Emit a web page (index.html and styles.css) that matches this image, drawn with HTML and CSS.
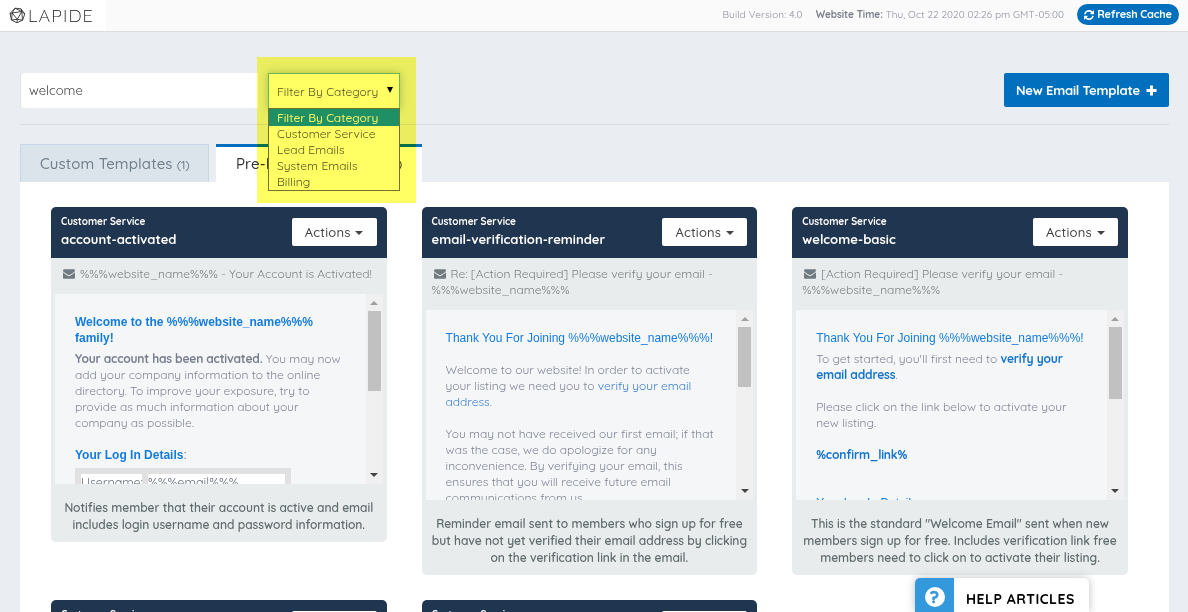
FILE: index.html
```html
<!DOCTYPE html>
<html lang="en">
<head>
<meta charset="utf-8">
<title>Email Templates</title>
<link rel="stylesheet" href="styles.css">
</head>
<body>
<svg class="defs" width="0" height="0">
  <symbol id="mail" viewBox="0 256 1792 1408"><path d="M1792 710v794q0 66-47 113t-113 47h-1472q-66 0-113-47t-47-113v-794q44 49 101 87 362 246 497 345 57 42 92.500 65.500t94.500 48 110 24.500h2q51 0 110-24.500t94.500-48 92.500-65.500q170-123 498-345 57-39 100-87zm0-294q0 79-49 151t-122 123q-376 261-468 325-10 7-42.500 31t-54 38.500-52 32.500-57.500 27-50 9h-2q-23 0-50-9t-57.500-27-52-32.500-54-38.500-42.500-31q-91-64-262-182.500t-205-142.500q-62-42-117-115.500t-55-136.500q0-78 41.500-130t118.500-52h1472q65 0 112.500 47t47.500 113z"/></symbol>
</svg>
<header class="topbar">
  <div class="brand">
    <svg class="brand-mark" viewBox="0 0 17 17" fill="none" stroke="#333" stroke-width=".900" stroke-linejoin="round"><path d="M6 1.200 12 1.800 15.800 7 13.500 13.200 8 15.800 2.500 13 1 6.500Z"/><path d="M6 1.200 3.200 6 12.800 4.500 8.300 12.300 3.200 6 1 6.500M12 1.800 12.800 4.500 15.800 7M12.800 4.500 13.500 13.200 8.300 12.300 8 15.800M8.300 12.300 2.500 13 3.200 6M6 1.200 12.800 4.500"/></svg>
    <span class="brand-name">LAPIDE</span>
  </div>
  <div class="status">
    <span class="build">Build Version: 4.0</span>
    <span class="time"><b>Website Time:</b> Thu, Oct 22 2020 02:26 pm GMT-05:00</span>
    <button class="refresh"><svg viewBox="0 0 1536 1536"><path fill="#fff" d="M1511 928q0 5-1 7-64 268-268 434.500t-478 166.500q-146 0-282.500-55t-243.500-157l-129 129q-19 19-45 19t-45-19-19-45v-448q0-26 19-45t45-19h448q26 0 45 19t19 45-19 45l-137 137q71 66 161 102t187 36q134 0 250-65t186-179q11-17 53-117 8-23 30-23h192q13 0 22.500 9.500t9.500 22.500zm25-800v448q0 26-19 45t-45 19h-448q-26 0-45-19t-19-45 19-45l138-138q-148-137-349-137-134 0-250 65t-186 179q-11 17-53 117-8 23-30 23h-199q-13 0-22.500-9.500t-9.500-22.500v-7q65-268 270-434.500t480-166.500q146 0 284 55.500t245 156.500l130-129q19-19 45-19t45 19 19 45z"/></svg><span>Refresh Cache</span></button>
  </div>
</header>
<main class="page">
  <div class="toolbar">
    <div class="search">welcome</div>
    <div class="filter">
      <div class="select"><span>Filter By Category</span><i class="select-arrow"></i></div>
      <ul class="options">
        <li class="on">Filter By Category</li>
        <li>Customer Service</li>
        <li>Lead Emails</li>
        <li>System Emails</li>
        <li>Billing</li>
      </ul>
      <div class="marker"></div>
    </div>
    <button class="new"><span>New Email Template</span><svg viewBox="0 0 11 11"><path fill="#fff" d="M4 .500h3V4h3.500v3H7v3.500H4V7H.500V4H4z"/></svg></button>
  </div>
  <nav class="tabs">
    <div class="tab">Custom Templates <small>(1)</small></div>
    <div class="tab active"><span>Pre-Made Templates</span><small>(6)</small></div>
  </nav>
  <section class="panel">
    <article class="card">
      <div class="card-head"><div><div class="cat">Customer Service</div><div class="name">account-activated</div></div><button class="actions">Actions <i></i></button></div>
      <div class="subject"><svg><use href="#mail"/></svg>%%%website_name%%% - Your Account is Activated!</div>
      <div class="preview">
        <div class="mail">
          <h4>Welcome to the %%%website_name%%%<br>family!</h4>
          <p><b>Your account has been activated.</b> You may now<br>add your company information to the online<br>directory. To improve your exposure, try to<br>provide as much information about your<br>company as possible.</p>
          <h4 class="login">Your Log In Details<span>:</span></h4>
          <div class="creds"><span>Username:</span><span>%%%email%%%</span></div>
        </div>
        <div class="bar"><i class="up"></i><i class="thumb t1"></i><i class="down"></i></div>
      </div>
      <div class="desc">Notifies member that their account is active and email<br>includes login username and password information.</div>
    </article>
    <article class="card">
      <div class="card-head"><div><div class="cat">Customer Service</div><div class="name">email-verification-reminder</div></div><button class="actions">Actions <i></i></button></div>
      <div class="subject"><svg><use href="#mail"/></svg>Re: [Action Required] Please verify your email -<br>%%%website_name%%%</div>
      <div class="preview">
        <div class="mail">
          <h4 class="thin">Thank You For Joining %%%website_name%%%!</h4>
          <p class="gap">Welcome to our website! In order to activate<br>your listing we need you to <a>verify your email<br>address</a>.</p>
          <p class="gap">You may not have received our first email; if that<br>was the case, we do apologize for any<br>inconvenience. By verifying your email, this<br>ensures that you will receive future email<br>communications from us.</p>
        </div>
        <div class="bar"><i class="up"></i><i class="thumb t2"></i><i class="down"></i></div>
      </div>
      <div class="desc">Reminder email sent to members who sign up for free<br>but have not yet verified their email address by clicking<br>on the verification link in the email.</div>
    </article>
    <article class="card">
      <div class="card-head"><div><div class="cat">Customer Service</div><div class="name name-wide">welcome-basic</div></div><button class="actions">Actions <i></i></button></div>
      <div class="subject"><svg><use href="#mail"/></svg>[Action Required] Please verify your email -<br>%%%website_name%%%</div>
      <div class="preview">
        <div class="mail">
          <h4 class="thin">Thank You For Joining %%%website_name%%%!</h4>
          <p>To get started, you'll first need to <a class="strong">verify your<br>email address</a>.</p>
          <p class="gap">Please click on the link below to activate your<br>new listing.</p>
          <p class="gap"><a class="strong">%confirm_link%</a></p>
          <h4 class="thin more">Your Log In Details</h4>
        </div>
        <div class="bar"><i class="up"></i><i class="thumb t3"></i><i class="down"></i></div>
      </div>
      <div class="desc">This is the standard "Welcome Email" sent when new<br>members sign up for free. Includes verification link free<br>members need to click on to activate their listing.</div>
    </article>
    <article class="card">
      <div class="card-head"><div class="cat">Customer Service</div><button class="actions">Actions <i></i></button></div>
    </article>
    <article class="card">
      <div class="card-head"><div class="cat">Customer Service</div><button class="actions">Actions <i></i></button></div>
    </article>
  </section>
</main>
<aside class="help">
  <div class="help-icon"><b>?</b></div>
  <div class="help-text">HELP ARTICLES</div>
</aside>
</body>
</html>
```
FILE: styles.css
```css
* { box-sizing: border-box; }
html, body { height: 612px; overflow: hidden; }
html { background: #eaedf2; }
body { margin: 0; font: 12px/16px Quicksand, Lato, sans-serif; color: #444; position: relative; white-space: nowrap; }
button { font: inherit; border: 0; padding: 0; white-space: nowrap; }
.defs { position: absolute; }

.topbar { height: 32px; background: #fafafa; border-bottom: 1px solid #dcdde0; display: flex; justify-content: space-between; }
.brand { width: 106px; background: #fff; display: flex; align-items: center; padding-left: 9px; }
.brand-mark { width: 17px; height: 17px; margin-top: -1px; }
.brand-name { font-size: 18px; font-weight: 300; color: #111; letter-spacing: 1.100px; margin-left: 2px; line-height: 31px; margin-top: -1px; }
.status { display: flex; align-items: center; font-size: 10px; color: #8d909c; padding-right: 9px; margin-top: -2px; }
.build { letter-spacing: .15px; margin-right: 13px; }
.time { letter-spacing: .07px; margin-right: 13px; }
.time b { color: #7b7f8a; letter-spacing: -.05px; }
.refresh { width: 102px; height: 21px; border-radius: 11px; background: #0070be; color: #fff; font-weight: 700; font-size: 11px; letter-spacing: -.2px; display: flex; align-items: center; justify-content: center; gap: 3px; }
.refresh span { margin-top: -1px; }
.refresh svg { width: 10px; height: 10px; }

.page { padding: 41px 19px 0 20px; }
.toolbar { display: flex; height: 52px; align-items: flex-start; border-bottom: 1px solid #d8dadf; }
.search { width: 248px; height: 35px; background: linear-gradient(to right, #fff 237px, #eaedf2 237px); border-left: 1px solid #e1e3e6; border-radius: 4px 0 0 4px; padding: 9px 8px; font-size: 13px; color: #444; }
.filter { position: relative; width: 132px; height: 36px; }
.select { height: 36px; background: #fff; border: 1px solid #70b4e0; box-shadow: 0 0 8px rgba(80, 130, 150, .45); display: flex; align-items: center; justify-content: space-between; padding: 1px 6px 0 8px; color: #555; letter-spacing: .05px; }
.select-arrow { border: solid transparent; border-width: 6px 3.500px 0; border-top-color: #000; margin-top: -3px; }
.options { position: absolute; z-index: 3; top: 35px; left: 0; width: 132px; height: 83px; margin: 0; padding: 0; list-style: none; background: #fff; border: 1px solid #747474; color: #555; letter-spacing: .05px; }
.options li { height: 16px; padding-left: 8px; }
.options .on { background: #1e90ff; color: #f4f4ff; height: 17px; line-height: 17px; font-weight: 500; letter-spacing: -.05px; }
.marker { position: absolute; z-index: 4; left: -11px; top: -16px; width: 159px; height: 146px; background: #ffff64; mix-blend-mode: multiply; }
.new { margin-left: auto; width: 165px; height: 34px; background: #0070be; color: #fff; border-radius: 2px; font-size: 13px; font-weight: 700; display: flex; align-items: center; justify-content: center; gap: 6px; letter-spacing: -.2px; }
.new svg { width: 11px; height: 11px; }

.tabs { display: flex; gap: 7px; padding-top: 19px; height: 57px; }
.tab { width: 189px; background: #dbe4eb; border: 1px solid #c8d8e6; border-bottom: 0; padding: 10px 19px; font-size: 15px; line-height: 18px; font-weight: 500; letter-spacing: .12px; color: #70808c; }
.tab small { font-size: 12px; letter-spacing: -.2px; }
.tab.active { width: 206px; background: #fff; border: 0; border-top: 3px solid #0070be; padding: 8px 20px; color: #333; display: flex; justify-content: space-between; }

.panel { background: #fff; height: 430px; overflow: hidden; padding: 25px 41px 0 31px; display: grid; grid-template-columns: repeat(3, 335.600px); column-gap: 35px; grid-template-rows: 368px 37px; row-gap: 25px; align-items: start; }
.card { background: #e8ecec; border-radius: 5px; overflow: hidden; }
.card-head { height: 51px; background: #20354f; color: #fff; display: flex; justify-content: space-between; align-items: flex-start; padding: 11px 10px 0; }
.cat { font-size: 10px; line-height: 8px; font-weight: 700; letter-spacing: -.06px; }
.name { font-size: 13px; line-height: 16px; font-weight: 700; margin-top: 5px; }
.name-wide { letter-spacing: .03px; }
.actions { width: 85px; height: 28px; border-radius: 2px; background: #fff; color: #444; font-size: 13px; font-weight: 500; letter-spacing: .2px; }
.actions i { display: inline-block; vertical-align: 2px; border: solid transparent; border-width: 4px 4px 0; border-top-color: #444; margin-left: 1px; }
.subject { padding: 8px 10px 12px; color: #7c8184; }
.subject svg { width: 12px; height: 10px; fill: #707b81; margin: 0 5px 0 2px; vertical-align: -1px; }
.preview { margin: 0 4px; height: 190px; background: #f5f6f8; display: flex; overflow: hidden; }
.mail { flex: 1; min-width: 0; padding: 20px 0 0 20px; color: #808597; }
.mail h4 { margin: 0; font: 700 12px/16px "Liberation Sans", Arial, sans-serif; color: #147cdc; }
.mail h4.thin { font-weight: 400; }
.mail p { margin: 5px 0 0; letter-spacing: -.02px; }
.mail p.gap { margin-top: 16px; }
.mail b { color: #767e8e; font-weight: 700; letter-spacing: -.2px; }
.mail a { color: #3f80cc; }
.mail a.strong { color: #1474cc; font-weight: 700; letter-spacing: -.17px; }
.mail h4.login { margin-top: 16px; }
.login span { font-weight: 400; color: #7c8494; }
.mail h4.more { margin-top: 32px; }
.creds { width: 216px; margin-top: 5px; background: #e1e1e1; padding: 6px; display: flex; gap: 6px; color: #666e7a; font-size: 12.600px; }
.creds span { background: #fff; height: 20px; line-height: 16px; }
.creds span:first-child { width: 61px; letter-spacing: -.1px; }
.creds span:last-child { flex: 1; }
.bar { flex: none; width: 17px; background: #f0f0f0; display: flex; flex-direction: column; align-items: center; }
.bar .up { border: solid transparent; border-width: 0 4px 4px; border-bottom-color: #a0a0a0; margin: 7px 0 6px; }
.bar .down { border: solid transparent; border-width: 4px 4px 0; border-top-color: #444; margin: auto 0 7px; }
.thumb { width: 13px; background: #c1c1c1; }
.t1 { height: 80px; }
.t2 { height: 60px; }
.t3 { height: 72px; }
.desc { padding: 15px 0 9px; text-align: center; line-height: 17px; font-weight: 600; letter-spacing: -.05px; color: #606b6d; }

.help { position: absolute; left: 915px; top: 578px; width: 174px; height: 34px; display: flex; background: #fff; border-radius: 5px 5px 0 0; box-shadow: 0 0 8px rgba(0, 0, 0, .25); overflow: hidden; z-index: 5; }
.help-icon { width: 39px; background: #3498dc; display: flex; justify-content: center; padding-top: 9px; }
.help-icon b { width: 20px; height: 20px; border-radius: 50%; background: #fff; color: #3498dc; font-size: 17px; font-weight: 900; line-height: 20px; text-align: center; -webkit-text-stroke: .6px #3498dc; }
.help-text { padding: 12px 0 0 12px; color: #000; font-size: 14px; line-height: 18px; font-weight: 700; letter-spacing: .5px; }
```
